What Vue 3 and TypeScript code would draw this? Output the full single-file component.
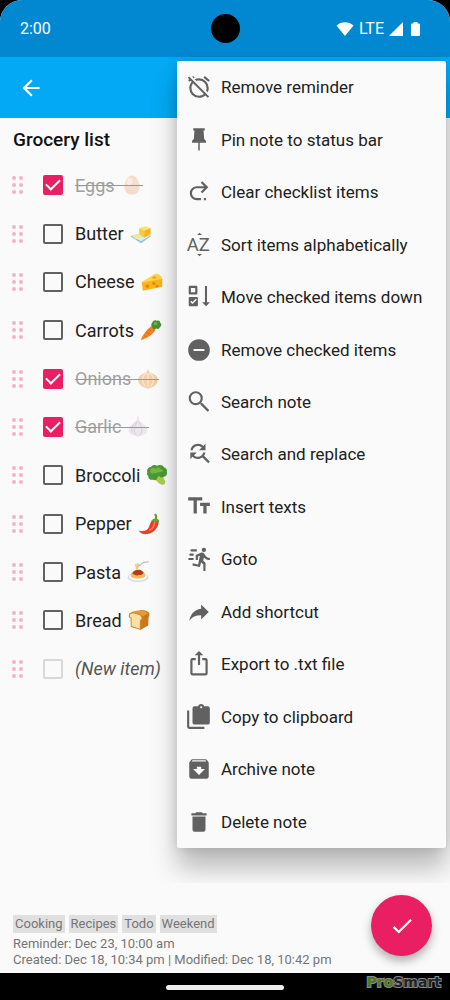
<script setup lang="ts">
import { ref } from 'vue'

interface Item {
  name: string
  done: boolean
  art: string
}

interface Action {
  label: string
  art: string
}

const items = ref<Item[]>([
  {
    name: 'Eggs',
    done: true,
    art: '<path fill="#f0c2a0" d="M12 1.5c4.300 0 8.300 7 8.300 12.500 0 5.300-3.700 8.700-8.300 8.700s-8.300-3.400-8.300-8.700C3.700 8.500 7.700 1.500 12 1.500z"/><ellipse cx="9.500" cy="8" rx="3" ry="4" fill="#fbe3d0" transform="rotate(20 9.500 8)"/>',
  },
  {
    name: 'Butter',
    done: false,
    art: '<path fill="#8fc3d6" d="M.5 14.500 12 11l11.500 3L12 22z"/><path fill="#d8eef4" d="M1.500 14 12 11l10.500 2.500L12 20z"/><path fill="#fbe68a" d="m3 14 5-2.300 4 3.300-5.500 3z"/><path fill="#ffe36b" d="m10 5.500 7-2 5.500 2.200-7 2.800z"/><path fill="#fdc938" d="m10 5.500 5.500 3V16L10 12.500z"/><path fill="#f5b21c" d="m15.500 8.500 7-2.800v6.500l-7 3.800z"/>',
  },
  {
    name: 'Cheese',
    done: false,
    art: '<path fill="#ffd54a" d="M.8 12 15.500 3c4.500 0 7.700 2.800 7.700 6.500L.8 13z"/><path fill="#fbb41a" d="m.8 12.500 22.400-3.800v8.600L2 21.500z"/><circle cx="7" cy="16.500" r="2" fill="#e58a0c"/><circle cx="14" cy="13.500" r="1.700" fill="#e58a0c"/><circle cx="17.500" cy="16.600" r="1.500" fill="#e58a0c"/><ellipse cx="14.500" cy="7.200" rx="2.300" ry="1.300" fill="#f0a315"/>',
  },
  {
    name: 'Carrots',
    done: false,
    art: '<path fill="#f58220" d="M13 7.500c2.500.3 4 2 4 4.300C14 17 7 21.500.8 23 3 17 8 10 13 7.500z"/><path stroke="#d5610a" d="m7 14 2.500 2M10 11l2 2M5 18l1.500 1.500"/><path fill="#4c8f35" d="M13 9c-1-2-1-4 .5-5.200C14 1.500 17 .5 18.500 2 20 1 22 2 22 4c1.800 1 1.600 4-.2 4.800-.5 2.200-2.800 2.500-4.200 1.600L15 11.500z"/><circle cx="17" cy="5" r="1.800" fill="#76b84c"/>',
  },
  {
    name: 'Onions',
    done: true,
    art: '<path fill="#e9a75d" d="M12 1c.7 3.300 3 4.300 6 5.500 3.500 1.500 5 4 4.800 7.200-.3 4.300-5.800 8-10.800 8.800-5-.8-10.500-4.500-10.800-8.800C1 10.500 2.500 8 6 6.500c3-1.200 5.300-2.200 6-5.500z"/><path fill="none" stroke="#f8d7a0" stroke-width="1.500" d="M11 5c-5 3-7 8-2 15M13 5c5 3 7 8 2 15M12 6v15"/>',
  },
  {
    name: 'Garlic',
    done: true,
    art: '<path fill="#ded5df" d="M11 .5h2c-.3 4 1 6 4.500 8 4 2.300 5.500 5 4.800 8-1 4-5.800 4.500-10.300 6-4.500-1.500-9.300-2-10.300-6-.7-3 .8-5.700 4.800-8 3.500-2 4.800-4 4.500-8z"/><path fill="none" stroke="#af9fb5" d="M11.500 6c-3 4-6 10-1 15M12.500 6c3 4 6 10 1 15M10 6c-4 4-6 7-4 12"/>',
  },
  {
    name: 'Broccoli',
    done: false,
    art: '<path fill="#a8cf4c" d="m8 10 8-2 5 11c.3 2.500-1.500 4-4 3.500-3-1-5-4-9-7z"/><path fill="#4c9a34" d="M1.500 9C.5 5.500 3 3 5.500 3.200 7 .8 10 .5 12 1.800 15 .3 18.500 1 19.500 3.500c2.500.5 4 3 3.200 5.300.8 3-1 5-3.200 5.200-2 1.500-4 .5-5-1l-2 1.500c.2 3-3 4-5 2.800C4 17.500 2 15.500 2.500 13 .8 12 .6 10.300 1.500 9z"/><path fill="#72b844" d="M5 6c1-2 4-2 5-.5 2-2.500 5-2 6 0 2-.5 3 1.500 2 3-2-.5-3 1-5 .5-2 2-4 0-6 1.500C4.500 10 3.800 8 5 6z"/>',
  },
  {
    name: 'Pepper',
    done: false,
    art: '<path fill="#e8402a" d="M15.500 8c2-2.500 6-2 7 .5C23 15 18 22 10 23 6 23.500 2 22 .8 19c5 1.500 9 .5 11-3.500 1.300-2.500 1.700-5.500 3.700-7.500z"/><path fill="none" stroke="#ff8a5c" stroke-width="1.500" stroke-linecap="round" d="M18 10c0 4-2 7-5 8.500"/><path fill="#6aa52f" d="M18 6.800c1-2 .7-3.500-.5-5.300L19.500.5c1.500 1.800 2 4 1.300 6 1.700.5 2.500 1.500 2.400 3.500l-2.700-1-2 1.500-1.500-1.800-2.500.8c0-1.500 1-2.700 3.500-2.700z"/>',
  },
  {
    name: 'Pasta',
    done: false,
    art: '<ellipse cx="12" cy="18" rx="11.500" ry="5" fill="#d9dde0"/><ellipse cx="12" cy="17.300" rx="10" ry="4" fill="#f7f7f7"/><path fill="#f2bd58" d="M4 16c0-4 4-5.500 8-5.500s8 1.500 8 5.500c-1 4-15 4-16 0z"/><path fill="#b9381c" d="M6 14c0-3 4-4.500 6.500-4.500S18 11 18 13.500c-2 1-3 2.500-5 1.500-2 2-5 0-7-1z"/><path fill="#f4cc73" d="M8.500 3.500c2-1.500 4-1 5 .5l-2 5.500h-1.500z"/><path fill="none" stroke="#b8bec2" stroke-width="1.300" stroke-linecap="round" d="M12 5.500C15 6 15.500 2 18 1.500c1.500-.4 3-.5 5-.5"/>',
  },
  {
    name: 'Bread',
    done: false,
    art: '<path fill="#c9781e" d="M9 3.500 14 1c4 0 9 1.500 9.500 4.500.2 2-1 3-1 3.500l-.5 9-8.500 5z"/><path fill="#e59a34" d="M3 3.500C7 1.500 14 1 18 2l4 3-8 4z"/><path fill="#d4872a" d="M.8 7.500C.8 4 4 3 8 4s8 2 8 6c0 1.500-1 2.300-1.700 2.500l-.3 10.500L3 19.500 2.800 10C1.500 9.500.8 8.700.8 7.500z"/><path fill="#fbe0a5" d="M2 7.500c0-2.300 2.500-3 5.500-2.300 4 .8 7.200 2 7.200 4.800 0 1-1 1.700-1.700 2l-.2 9.500L4 18.600 3.900 9.500C2.700 9 2 8.500 2 7.500z"/>',
  },
])

const actions: Action[] = [
  {
    label: 'Remove reminder',
    art: '<path d="M8,3.28L6.6,1.86L5.74,2.57L7.16,4M16.47,18.39C15.26,19.39 13.7,20 12,20A7,7 0 0,1 5,13C5,11.3 5.61,9.74 6.61,8.53M2.92,2.29L1.65,3.57L3,4.9L1.87,5.83L3.29,7.25L4.4,6.31L5.2,7.11C3.83,8.69 3,10.75 3,13A9,9 0 0,0 12,22C14.25,22 16.31,21.17 17.89,19.8L20.09,22L21.36,20.73L3.89,3.27L2.92,2.29M22,5.72L17.4,1.86L16.11,3.39L20.71,7.25L22,5.72M12,6A7,7 0 0,1 19,13C19,13.84 18.84,14.65 18.57,15.4L20.09,16.92C20.67,15.73 21,14.41 21,13A9,9 0 0,0 12,4C10.59,4 9.27,4.33 8.08,4.91L9.6,6.43C10.35,6.16 11.16,6 12,6Z"/>',
  },
  {
    label: 'Pin note to status bar',
    art: '<path d="M6.700 1.200h10.600v2.100h-1.100l.6 7.700 1.600 1.600v2h-5.700v7.200h-1.400v-7.200H5.600v-2L7.200 11l.6-7.700H6.700z"/>',
  },
  {
    label: 'Clear checklist items',
    art: '<path fill="none" stroke="currentColor" stroke-width="2" d="M19 7.600H10a5.500 5.500 0 0 0 0 11h3.800M14.300 2.700l4.900 4.900-4.900 4.900"/><path d="M16.500 17.600h2v2h-2z"/>',
  },
  {
    label: 'Sort items alphabetically',
    art: '<text x="0.800" y="17.700" font-family="Roboto" font-size="17" font-weight="400">AZ</text><path d="M10.200 2.800 12.500.6l2.300 2.200zM10.200 20.200h4.600l-2.300 2.200z"/>',
  },
  {
    label: 'Move checked items down',
    art: '<path fill="none" stroke="currentColor" stroke-width="2" stroke-linejoin="round" d="M3.500 2.700h6v6h-6z"/><path fill-rule="evenodd" d="M3.500 12h6.500a1 1 0 0 1 1 1v6.500a1 1 0 0 1-1 1H3.500a1 1 0 0 1-1-1V13a1 1 0 0 1 1-1zM4 16.500l2 2 4-4-.9-1-3.100 3-1.100-1.100zM17.500 1.800h1.900v15h2.700l-3.600 3.700-3.600-3.700h2.600z"/>',
  },
  {
    label: 'Remove checked items',
    art: '<path d="M17,13H7V11H17M12,2A10,10 0 0,0 2,12A10,10 0 0,0 12,22A10,10 0 0,0 22,12A10,10 0 0,0 12,2Z"/>',
  },
  {
    label: 'Search note',
    art: '<path d="M9,2A6.500,6.500 0 0,1 15.500,8.500C15.500,10.110 14.910,11.590 13.940,12.730L14.210,13H15L21.500,19.500L20,21L13.500,14.500V13.710L13.230,13.440C12.090,14.410 10.610,15 9,15A6.500,6.500 0 0,1 2.500,8.500A6.500,6.500 0 0,1 9,2M9,4C6.500,4 4.500,6 4.500,8.500C4.500,11 6.500,13 9,13C11.500,13 13.500,11 13.500,8.500C13.500,6 11.500,4 9,4Z"/>',
  },
  {
    label: 'Search and replace',
    art: '<path d="M11,4.500C12.38,4.500 13.63,5.060 14.54,5.960L12,8.500H18V2.500L15.95,4.550C14.68,3.280 12.93,2.500 11,2.500C7.47,2.500 4.57,5.110 4.08,8.500H6.1C6.56,6.220 8.58,4.500 11,4.500M16.64,13.640C17.3,12.740 17.76,11.670 17.92,10.500H15.9C15.44,12.780 13.42,14.500 11,14.500C9.62,14.500 8.37,13.940 7.46,13.040L10,10.500H4V16.500L6.05,14.450C7.32,15.720 9.07,16.500 11,16.500C12.55,16.500 14,16 15.14,15.140L20.500,20.500L22,19L16.64,13.640Z"/>',
  },
  {
    label: 'Insert texts',
    art: '<path d="M2 3v3h5v12h3V6h5V3zM22 8h-9v3h3v7h3v-7h3z"/>',
  },
  {
    label: 'Goto',
    art: '<path d="M16.5,5.5A2,2 0 0,0 18.5,3.5A2,2 0 0,0 16.5,1.5A2,2 0 0,0 14.5,3.5A2,2 0 0,0 16.5,5.5M12.9,19.4L13.9,15L16,17V23H18V15.5L15.9,13.5L16.5,10.5C17.89,12.09 19.89,13 22,13V11C20.24,11.03 18.6,10.11 17.7,8.6L16.7,7C16.34,6.4 15.7,6 15,6C14.7,6 14.5,6.1 14.2,6.1L9,8.3V13H11V9.6L12.8,8.9L11.2,17L6.3,16L5.9,18L12.9,19.4M4,9A1,1 0 0,1 3,8A1,1 0 0,1 4,7H7V9H4M5,5A1,1 0 0,1 4,4A1,1 0 0,1 5,3H10V5H5M3,13A1,1 0 0,1 2,12A1,1 0 0,1 3,11H7V13H3Z"/>',
  },
  {
    label: 'Add shortcut',
    art: '<path d="M21,12L14,5V9C7,10 4,15 3,20C5.5,16.5 9,14.9 14,14.9V19L21,12Z"/>',
  },
  {
    label: 'Export to .txt file',
    art: '<path d="M12,0L8,4H11V13H13V4H16M18,22.500H6C4.89,22.500 4,21.600 4,20.500V8.500A2,2 0 0,1 6,6.500H9V8.500H6V20.500H18V8.500H15V6.500H18A2,2 0 0,1 20,8.500V20.500A2,2 0 0,1 18,22.500Z"/>',
  },
  {
    label: 'Copy to clipboard',
    art: '<path d="M3,6V21H17V23H3A2,2 0 0,1 1,21V6H3M20,2A2,2 0 0,1 22,4V17A2,2 0 0,1 20,19H8A2,2 0 0,1 6,17V4A2,2 0 0,1 8,2H11.18C11.6,.84 12.7,0 14,0C15.3,0 16.4,.84 16.82,2H20M14,2A1,1 0 0,0 13,3A1,1 0 0,0 14,4A1,1 0 0,0 15,3A1,1 0 0,0 14,2Z"/>',
  },
  {
    label: 'Archive note',
    art: '<path d="M20.54 5.23l-1.39-1.68C18.88 3.21 18.47 3 18 3H6c-.47 0-.88.21-1.16.55L3.46 5.23C3.17 5.57 3 6.02 3 6.5V19c0 1.1.9 2 2 2h14c1.1 0 2-.9 2-2V6.5c0-.48-.17-.93-.46-1.27zM12 17.5L6.5 12H10v-2h4v2h3.5L12 17.5zM5.12 5l.81-1h12l.94 1H5.12z"/>',
  },
  {
    label: 'Delete note',
    art: '<path d="M19,4H15.5L14.5,3H9.5L8.5,4H5V6H19M6,19A2,2 0 0,0 8,21H16A2,2 0 0,0 18,19V7H6V19Z"/>',
  },
]

const tags = ['Cooking', 'Recipes', 'Todo', 'Weekend']
const newDone = ref(false)
</script>

<template>
  <div class="phone">
    <div class="status">
      <span class="clock">2:00</span>
      <span class="camera"></span>
      <div class="signals">
        <svg class="wifi" viewBox="0 0 18 14" aria-hidden="true">
          <path d="M9 14 .5 3.600C2.800 1.500 5.700.3 9 .3s6.200 1.200 8.500 3.300z" />
        </svg>
        <span>LTE</span>
        <svg class="cell" viewBox="0 0 14 14" aria-hidden="true"><path d="M14 0v14H0z" /></svg>
        <svg class="battery" viewBox="0 0 9 14" aria-hidden="true">
          <path d="M2.500 0h4v1.500H8a1 1 0 0 1 1 1V13a1 1 0 0 1-1 1H1a1 1 0 0 1-1-1V2.500a1 1 0 0 1 1-1h1.500z" />
        </svg>
      </div>
    </div>

    <header class="bar">
      <button class="back" type="button" aria-label="Back">
        <svg viewBox="0 0 24 24" aria-hidden="true">
          <path d="M20,11V13H8L13.5,18.5L12.08,19.92L4.16,12L12.08,4.08L13.5,5.5L8,11H20Z" />
        </svg>
      </button>
    </header>

    <main class="note">
      <h1>Grocery list</h1>
      <ul class="list">
        <li v-for="(item, i) in items" :key="item.name">
          <span class="grip"><i v-for="n in 6" :key="n"></i></span>
          <input :id="'item-' + i" v-model="item.done" type="checkbox" />
          <label :for="'item-' + i" :class="{ done: item.done }">
            {{ item.name }}
            <svg viewBox="0 0 24 24" aria-hidden="true" v-html="item.art"></svg>
          </label>
        </li>
        <li class="fresh">
          <span class="grip"><i v-for="n in 6" :key="n"></i></span>
          <input id="item-new" v-model="newDone" type="checkbox" />
          <label for="item-new">(New item)</label>
        </li>
      </ul>
    </main>

    <nav class="menu" aria-label="Note actions">
      <button v-for="action in actions" :key="action.label" type="button">
        <svg viewBox="0 0 24 24" aria-hidden="true" v-html="action.art"></svg>
        <span>{{ action.label }}</span>
      </button>
    </nav>

    <footer class="info">
      <div class="details">
        <div class="tags">
          <span v-for="tag in tags" :key="tag">{{ tag }}</span>
        </div>
        <p>Reminder: Dec 23, 10:00 am</p>
        <p>Created: Dec 18, 10:34 pm | Modified: Dec 18, 10:42 pm</p>
      </div>
      <button class="save" type="button" aria-label="Save">
        <svg viewBox="0 0 24 24" aria-hidden="true">
          <path d="M21,7L9,19L3.5,13.5L4.91,12.09L9,16.17L19.59,5.59L21,7Z" />
        </svg>
      </button>
    </footer>

    <div class="home">
      <span class="pill"></span>
      <span class="brand"><b>Pro</b>Smart</span>
    </div>
  </div>
</template>

<style>
body {
  margin: 0;
  background: #000;
}
</style>

<style scoped>
.phone {
  position: relative;
  display: flex;
  flex-direction: column;
  min-height: 100vh;
  overflow: hidden;
  border-radius: 22px 22px 0 0;
  background: #fafafa;
  color: #212121;
  font-family: Roboto, "Liberation Sans", sans-serif;
}

button {
  margin: 0;
  padding: 0;
  border: 0;
  background: none;
  color: inherit;
  font: inherit;
  cursor: pointer;
}

svg {
  display: block;
  flex: none;
  fill: currentColor;
}

.status {
  display: grid;
  grid-template-columns: 1fr auto 1fr;
  align-items: center;
  height: 57px;
  padding: 0 20px;
  box-sizing: border-box;
  background: #0288d1;
  color: #fff;
  font-size: 16px;
}

.camera {
  width: 29px;
  height: 29px;
  border-radius: 50%;
  background: #000;
}

.signals {
  display: flex;
  align-items: center;
  justify-content: flex-end;
  gap: 5px;
  padding-right: 10px;
}

.wifi {
  width: 18px;
  height: 14px;
}

.cell {
  width: 14px;
  height: 14px;
}

.battery {
  width: 9px;
  height: 14px;
  margin-left: 3px;
}

.bar {
  display: flex;
  align-items: center;
  height: 61px;
  padding: 0 18px;
  background: #03a9f4;
  color: #fff;
}

.back svg {
  width: 26px;
  height: 26px;
}

.note {
  flex: 1;
}

h1 {
  margin: 0;
  padding: 0 13px;
  color: #111;
  font-size: 19px;
  font-weight: 500;
  line-height: 43px;
}

.list {
  display: grid;
  grid-auto-rows: 1fr;
  min-height: 532px;
  margin: 0;
  padding: 0 12px;
  list-style: none;
}

.list li {
  display: flex;
  align-items: center;
}

.grip {
  display: grid;
  grid-template-columns: 4px 4px;
  gap: 3px;
  margin-right: 20px;
}

.grip i {
  width: 4px;
  height: 4px;
  border-radius: 50%;
  background: #f2b2c9;
}

.list input {
  display: grid;
  place-items: center;
  width: 20px;
  height: 20px;
  margin: 0 12px 0 0;
  box-sizing: border-box;
  border: 2px solid #616161;
  border-radius: 2px;
  appearance: none;
}

.list input:checked {
  border-color: #e91e63;
  background: #e91e63;
}

.list input:checked::after {
  content: "";
  width: 14px;
  height: 8px;
  margin-top: -4px;
  box-sizing: border-box;
  border: solid #fff;
  border-width: 0 0 2px 2px;
  transform: rotate(-45deg);
}

.list label {
  position: relative;
  display: flex;
  align-items: center;
  gap: 6px;
  font-size: 18px;
}

.list label svg {
  width: 22px;
  height: 22px;
}

.list .done {
  color: #a0a0a0;
}

.list .done svg {
  opacity: 0.5;
}

.list .done::after {
  content: "";
  position: absolute;
  top: 50%;
  right: 0;
  left: 0;
  height: 1px;
  background: #999;
}

.fresh label {
  color: #555;
  font-style: italic;
}

.list .fresh input {
  border-color: #d8d8d8;
}

.menu {
  position: absolute;
  z-index: 1;
  top: 61px;
  right: 4px;
  display: grid;
  grid-auto-rows: 1fr;
  min-width: 269px;
  min-height: 787px;
  border-radius: 2px;
  background: #fafafa;
  box-shadow: 0 20px 26px rgba(0, 0, 0, 0.26), 0 0 12px rgba(0, 0, 0, 0.12);
}

.menu button {
  display: flex;
  align-items: center;
  gap: 9px;
  padding: 0 18px 0 9px;
  font-size: 17px;
  text-align: left;
  white-space: nowrap;
}

.menu svg {
  width: 26px;
  height: 26px;
  color: #616161;
}

.info {
  position: relative;
  z-index: 2;
  display: flex;
  align-items: center;
  justify-content: space-between;
  height: 90px;
  padding: 0 18px 0 13px;
  background: #fafafa;
}

.details {
  padding-top: 26px;
  color: #757575;
  font-size: 13px;
}

.details p {
  margin: 0;
  line-height: 16px;
  white-space: nowrap;
}

.tags {
  display: flex;
  gap: 4px;
  margin-bottom: 3px;
  line-height: 18px;
}

.tags span {
  padding: 0 2px;
  background: #e0e0e0;
}

.save {
  display: grid;
  place-items: center;
  width: 61px;
  height: 61px;
  margin-bottom: 5px;
  border-radius: 50%;
  background: #e91e63;
  box-shadow: 0 5px 10px rgba(0, 0, 0, 0.3);
  color: #fff;
}

.save svg {
  width: 26px;
  height: 26px;
}

.home {
  position: relative;
  z-index: 2;
  display: grid;
  place-items: center;
  height: 27px;
  background: #000;
}

.pill {
  width: 118px;
  height: 5px;
  margin-top: 2px;
  border-radius: 3px;
  background: #eee;
}

.brand {
  position: absolute;
  right: 9px;
  bottom: 8px;
  color: #222;
  font-family: "DejaVu Sans", sans-serif;
  font-size: 14px;
  font-weight: 700;
  line-height: 20px;
  -webkit-text-stroke: 2px #888;
  paint-order: stroke fill;
}

.brand b {
  color: #4c7a1c;
}
</style>
